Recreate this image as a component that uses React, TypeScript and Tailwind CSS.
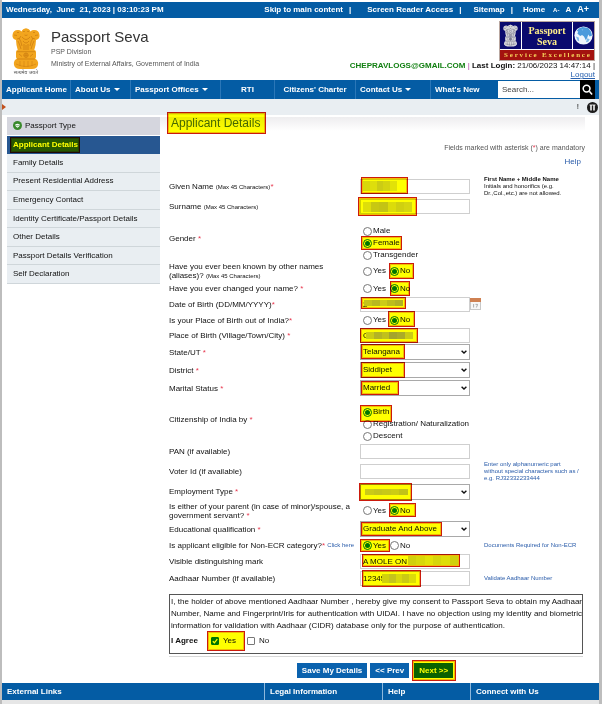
import React, { useState } from "react";
import type { ReactNode } from "react";

/* Marker-pen highlight laid over a control. */
function Mark({ className }: { className: string }) {
  return (
    <span
      aria-hidden="true"
      className={`pointer-events-none absolute z-10 border border-[#cc1a0c] bg-[#ffff00] mix-blend-multiply ring-1 ring-[#cc1a0c]/30 ring-inset ${className}`}
    />
  );
}

/* Mosaic that hides a private value. */
function Mosaic({ className, cells }: { className: string; cells: string[] }) {
  return (
    <span aria-hidden="true" className={`pointer-events-none absolute z-20 flex overflow-hidden ${className}`}>
      {cells.map((c, i) => (
        <span key={i} className={`h-full flex-1 ${c}`} />
      ))}
    </span>
  );
}

const Star = () => <span className="text-[#e8384f]">*</span>;
const Max = () => <span className="text-[6px]">(Max 45 Characters)</span>;

function Row({
  label,
  id,
  hint,
  className,
  children,
}: {
  label: ReactNode;
  id: string;
  hint?: ReactNode;
  className: string;
  children: ReactNode;
}) {
  return (
    <div className={`grid grid-cols-[191px_110px_1fr] items-center ${className}`}>
      <label id={`${id}-label`} htmlFor={id} className="leading-[9px]">
        {label}
      </label>
      <div className="relative flex h-full items-center">{children}</div>
      <div className="pl-3.5 text-[6px] leading-[7px]">{hint}</div>
    </div>
  );
}

function Text({ id, value }: { id: string; value?: string }) {
  return (
    <input
      id={id}
      type="text"
      defaultValue={value}
      className="h-[15px] w-full border border-[#cfcfcf] bg-white px-0.5 text-[8px] text-[#111] outline-none"
    />
  );
}

function Select({ id, options }: { id: string; options: string[] }) {
  return (
    <>
      <select
        id={id}
        className="h-4 w-full appearance-none border border-[#a9a9a9] bg-white px-0.5 text-[8px] text-[#111] outline-none"
      >
        {options.map((o) => (
          <option key={o}>{o}</option>
        ))}
      </select>
      <svg viewBox="0 0 6 4" className="pointer-events-none absolute right-[3px] h-1 w-1.5">
        <path d="M0.6 0.7 L3 3 L5.4 0.7" fill="none" stroke="#111" strokeWidth="1.4" />
      </svg>
    </>
  );
}

function Radio({ name, label, id, checked }: { name: string; label: string; id?: string; checked?: boolean }) {
  return (
    <label className="flex items-center gap-px whitespace-nowrap leading-3">
      <input
        id={id}
        type="radio"
        name={name}
        defaultChecked={checked}
        className="size-[9px] shrink-0 appearance-none rounded-full border border-[#777] bg-white p-px checked:border-[#0075ff] checked:bg-[#0075ff] checked:bg-clip-content"
      />
      {label}
    </label>
  );
}

function YesNo({ name, value }: { name: string; value: "Yes" | "No" }) {
  return (
    <div role="radiogroup" aria-labelledby={`${name}-label`} className="flex gap-1 pl-[3px]">
      <Radio id={name} name={name} label="Yes" checked={value === "Yes"} />
      <Radio name={name} label="No" checked={value === "No"} />
    </div>
  );
}

function Choices({ name, options, selected }: { name: string; options: string[]; selected: string }) {
  return (
    <div role="radiogroup" aria-labelledby={`${name}-label`} className="flex h-full flex-col justify-end pl-[3px]">
      {options.map((o, i) => (
        <Radio key={o} id={i === 0 ? name : undefined} name={name} label={o} checked={o === selected} />
      ))}
    </div>
  );
}

function Emblem({ main, shade, className }: { main: string; shade: string; className: string }) {
  return (
    <svg viewBox="0 0 28 41" className={className} aria-hidden="true">
      <g fill={main}>
        <circle cx="14" cy="5" r="4.6" />
        <path d="M9 4 Q14 -3 19 4 L19 22 L9 22 Z" />
        <path d="M0.5 7 Q1 2 6 2 Q10 2 10 6 L11 22 L6 23 Q4 17 4 12 Q0 11 0.5 7 Z" />
        <path d="M27.5 7 Q27 2 22 2 Q18 2 18 6 L17 22 L22 23 Q24 17 24 12 Q28 11 27.5 7 Z" />
        <rect x="4" y="22" width="20" height="9" rx="2" />
        <path d="M6 30 H22 Q27 32 26 37 Q25 41 20 41 H8 Q3 41 2 37 Q1 32 6 30 Z" />
      </g>
      <g fill="none" stroke={shade} strokeWidth="0.7">
        <path d="M11 3.5 H12.8 M15.2 3.5 H17 M12.5 7 Q14 8 15.5 7 M10 9 Q14 14 18 9 M11 13 Q14 17 17 13" />
        <path d="M2 7 L5 7.5 M5 4.5 H7 M5 11 Q8 11 9 8 M6 13 Q8 17 9 21 M7 10 Q9 13 10 18" />
        <path d="M26 7 L23 7.5 M23 4.5 H21 M23 11 Q20 11 19 8 M22 13 Q20 17 19 21 M21 10 Q19 13 18 18" />
        <path d="M12 16 V22 M16 16 V22 M14 17 V22 M5 23.7 H23 M5 31 H23" />
        <circle cx="14" cy="27.2" r="2.2" />
        <path d="M7 26 L10 28.5 M21 26 L18 28.5 M14 25 V29.4 M11.8 27.2 H16.2" />
        <path d="M4 36 Q14 41 24 36 M8 33 V38 M12 33 V39 M16 33 V39 M20 33 V38" strokeWidth="0.5" />
      </g>
    </svg>
  );
}

function ServiceLogo() {
  return (
    <div className="w-24 border border-[#b9a7a0] bg-white text-center font-['Liberation_Serif',serif] font-bold">
      <div className="flex h-[27px] gap-px">
        <div className="flex flex-1 flex-col items-center justify-center bg-[#0a0a6e]">
          <Emblem main="#d5d5da" shade="#33334f" className="h-[23px] w-[15px]" />
        </div>
        <div className="flex w-[50px] flex-col justify-center bg-[#0a0a6e] text-[10px] leading-[11px] text-[#ffef8a]">
          <span>Passport</span>
          <span>Seva</span>
        </div>
        <div className="flex flex-1 items-center justify-center bg-[#0a0a6e]">
          <svg viewBox="0 0 20 20" className="size-[19px]" aria-hidden="true">
            <circle cx="10" cy="10" r="9.6" fill="#eef6fd" />
            <path
              d="M5 2.5 L9 1 L15 2 L18 6 L19 10 L16.5 11 L15 9 L14 12 L12.5 15 L10.5 11 L8.5 9.5 L6.5 10.5 L3.5 8 L4.5 6 L3 5 Z"
              fill="#4b9bdc"
            />
            <path d="M14 13 L16.5 14 L15 16.5 L12.5 17 Z M2 11 L5 12 L5.5 16 L4 15.5 Z M8 3 L10 4 L8.5 5 Z" fill="#7db9e8" />
          </svg>
        </div>
      </div>
      <div className="mt-px flex h-2.5 items-center justify-between bg-[#a3120f] px-1 text-[7px] leading-[10px] text-[#f6d35a]">
        {"Service Excellence".split("").map((c, i) => (
          <span key={i}>{c === " " ? "\u00a0" : c}</span>
        ))}
      </div>
    </div>
  );
}

const Caret = () => (
  <svg viewBox="0 0 6 3" className="h-[3px] w-1.5" aria-hidden="true">
    <path d="M0 0 H6 L3 3 Z" fill="#fff" />
  </svg>
);

const navItems = [
  { label: "Applicant Home", box: "w-[69px] pl-1" },
  { label: "About Us", box: "w-[60px] pl-1", caret: true },
  { label: "Passport Offices", box: "w-[90px] pl-1", caret: true },
  { label: "RTI", box: "w-[54px] justify-center" },
  { label: "Citizens' Charter", box: "w-[81px] justify-center" },
  { label: "Contact Us", box: "w-[75px] pl-1", caret: true },
  { label: "What's New", box: "pl-1" },
];

const steps = [
  "Family Details",
  "Present Residential Address",
  "Emergency Contact",
  "Identity Certificate/Passport Details",
  "Other Details",
  "Passport Details Verification",
  "Self Declaration",
];

const topLinks = [
  { label: "Skip to main content", gap: "mr-4" },
  { label: "Screen Reader Access", gap: "mr-3" },
  { label: "Sitemap", gap: "mr-2.5" },
];

const footer = [
  { label: "External Links", box: "w-[262px] pl-[5px]" },
  { label: "Legal Information", box: "w-[118px] pl-[5px]" },
  { label: "Help", box: "w-[88px] pl-[5px]" },
  { label: "Connect with Us", box: "flex-1 pl-[5px]" },
];

export default function App() {
  const [agree, setAgree] = useState(true);
  const tick =
    "size-2 appearance-none rounded-[1px] border border-[#777] bg-white checked:border-[#0075ff] checked:bg-[#0075ff]";
  const button = "h-[15px] bg-[#0a62ae] px-[5px] text-[8px] leading-[15px] font-bold text-white";

  return (
    <div className="min-h-screen border-r-3 border-l-2 border-[#bdbdbd] bg-[#e6e6e6] font-['Liberation_Sans',Arial,sans-serif] text-[8px] text-[#111]">
      <div className="bg-white pt-0.5">
        <div className="flex h-4 items-center bg-[#045ca4] pr-2.5 pl-1 font-bold whitespace-pre text-white">
          <span className="flex-1">{"Wednesday,  June  21, 2023 | 03:10:23 PM"}</span>
          {topLinks.map((l) => (
            <span key={l.label} className={`flex gap-1.5 ${l.gap}`}>
              <a href="#main">{l.label}</a>
              <span>|</span>
            </span>
          ))}
          <a href="#home">Home</a>
          <button type="button" className="ml-2 text-[6px]">A-</button>
          <button type="button" className="ml-1.5">A</button>
          <button type="button" className="ml-1.5 text-[9px]">A+</button>
        </div>

        <header className="flex h-[62px] justify-between">
          <div className="flex pt-2.5 pl-2.5">
            <div className="flex w-7 flex-col items-center">
              <Emblem main="#f2a51e" shade="#c97a10" className="h-[41px] w-7" />
              <span className="font-['Noto_Sans',sans-serif] text-[5px] leading-[6px] whitespace-nowrap text-[#555]">सत्यमेव जयते</span>
            </div>
            <div className="pl-[11px] text-[7px] text-[#555]">
              <h1 className="text-[15px] leading-[18px] text-[#333]">Passport Seva</h1>
              <p className="leading-3">PSP Division</p>
              <p className="leading-3">Ministry of External Affairs, Government of India</p>
            </div>
          </div>
          <div className="flex flex-col items-end pt-[3px] pr-1">
            <ServiceLogo />
            <p className="whitespace-nowrap leading-[10px]">
              <b className="text-[#138013]">CHEPRAVLOGS@GMAIL.COM</b> <span className="text-[#b040a0]">|</span>{" "}
              <b>Last Login:</b> 21/06/2023 14:47:14 |
            </p>
            <a href="#logout" className="leading-[7px] text-[#2a62b0] underline">Logout</a>
          </div>
        </header>

        <nav className="flex h-[19px] bg-[#045ca4] pr-1 font-bold text-white">
          {navItems.map((n) => (
            <a
              key={n.label}
              href="#nav"
              className={`flex items-center gap-[3px] whitespace-nowrap ${n.box} ${n.label === "What's New" ? "flex-1" : "border-r border-[#2b77b8]"}`}
            >
              {n.label}
              {n.caret && <Caret />}
            </a>
          ))}
          <input
            type="text"
            aria-label="Search"
            placeholder="Search..."
            className="my-px w-[82px] bg-white px-1 text-[8px] font-normal text-[#222] outline-none placeholder:text-[#444]"
          />
          <button type="button" aria-label="Search" className="flex w-[15px] items-center justify-center bg-black">
            <svg viewBox="0 0 12 12" className="size-[11px]" fill="none" stroke="#fff" strokeWidth="1.7">
              <circle cx="5" cy="5" r="3.7" />
              <path d="M8 8 L11 11.4" />
            </svg>
          </button>
        </nav>

        <div className="flex h-4 items-center justify-between bg-[#e9eef2] pr-px">
          <svg viewBox="0 0 4 6" className="h-1.5 w-1" aria-hidden="true">
            <path d="M0 0 L4 3 L0 6 Z" fill="#c2501c" />
          </svg>
          <div className="flex items-center gap-2">
            <span>!</span>
            <button type="button" aria-label="Pause">
              <svg viewBox="0 0 11 11" className="size-[11px]">
                <circle cx="5.5" cy="5.5" r="5.5" fill="#1c1c1c" />
                <path d="M4 3 V8.4 M7 3 V8.4" stroke="#fff" strokeWidth="1.5" />
                <path d="M2.5 3 H8.5" stroke="#fff" strokeWidth="0.8" />
              </svg>
            </button>
          </div>
        </div>

        <div className="flex items-start pt-0.5 pr-3.5 pl-[5px]">
          <ol className="grid h-[167px] w-[153px] shrink-0 auto-rows-fr bg-[#e9eef2]">
            <li className="flex items-center gap-[3px] border-b border-white bg-[#d5d6de] pl-1.5">
              <svg viewBox="0 0 9 9" className="size-[9px]" aria-hidden="true">
                <circle cx="4.5" cy="4.5" r="4.5" fill="#3a8a2c" />
                <path d="M2.2 3.6 Q4.5 2 6.8 3.6 Q6.6 5.8 4.5 6.8 Q2.4 5.8 2.2 3.6 Z" fill="#fff" />
                <path d="M3.4 4 L4.5 5.2 L5.8 3.8" fill="none" stroke="#3a8a2c" strokeWidth="0.8" />
              </svg>
              Passport Type
            </li>
            <li className="relative flex items-center bg-[#275791] pl-1.5 font-bold text-white" aria-current="step">
              Applicant Details
              <Mark className="inset-y-px left-[3px] w-[70px]" />
            </li>
            {steps.map((s) => (
              <li key={s} className="flex items-center border-b border-[#cfd6da] pl-1.5">
                <a href="#step">{s}</a>
              </li>
            ))}
          </ol>

          <main id="main" className="min-w-0 flex-1 bg-linear-to-b from-[#eeedef] to-white to-[14px] pl-[9px]">
            <div className="relative">
              <h2 className="pl-0.5 text-[12px] leading-3 text-[#45687c]">Applicant Details</h2>
              <Mark className="-top-[5px] -left-0.5 h-[22px] w-[99px]" />
            </div>
            <p className="pt-3.5 text-right text-[7px] leading-[10px] text-[#555]">
              Fields marked with asterisk (<Star />) are mandatory
            </p>
            <p className="pt-1 pr-1 pb-[9px] text-right leading-[10px]">
              <a href="#help" className="text-[#2a5caa]">Help</a>
            </p>

            <form onSubmit={(e) => e.preventDefault()}>
              <Row
                id="given"
                className="min-h-[21px]"
                label={<>Given Name <Max /><Star /></>}
                hint={<><b className="whitespace-nowrap">First Name + Middle Name</b><br />Initials and honorifics (e.g.<br />Dr.,Col.,etc.) are not allowed.</>}
              >
                <Text id="given" />
                <Mark className="top-px left-px h-[17px] w-[47px]" />
                <Mosaic className="top-[5px] left-[3px] h-2.5 w-[34px]" cells={["bg-[#d8d80a]", "bg-[#dede0c]", "bg-[#cccc14]", "bg-[#d4d410]", "bg-[#e2e208]"]} />
              </Row>
              <Row id="surname" className="min-h-[19px]" label={<>Surname <Max /></>}>
                <Text id="surname" />
                <Mark className="top-0 -left-0.5 h-[19px] w-[59px]" />
                <Mosaic className="top-[5px] left-[3px] h-2.5 w-[49px]" cells={["bg-[#dede0a]", "bg-[#c8c812]", "bg-[#c4c414]", "bg-[#dcdc0a]", "bg-[#d0d010]", "bg-[#d6d610]"]} />
              </Row>
              <Row id="gender" className="min-h-[45px]" label={<>Gender <Star /></>}>
                <Choices name="gender" options={["Male", "Female", "Transgender"]} selected="Female" />
                <Mark className="top-5 left-px h-3.5 w-[41px]" />
              </Row>
              <Row id="alias" className="min-h-5" label={<>Have you ever been known by other names<br />(aliases)? <Max /></>}>
                <YesNo name="alias" value="No" />
                <Mark className="top-0.5 left-[29px] h-4 w-[25px]" />
              </Row>
              <Row id="renamed" className="min-h-[15px]" label={<>Have you ever changed your name? <Star /></>}>
                <YesNo name="renamed" value="No" />
                <Mark className="top-0 left-[30px] h-[15px] w-5" />
              </Row>
              <Row
                id="dob"
                className="min-h-4"
                label={<>Date of Birth (DD/MM/YYYY)<Star /></>}
                hint={
                  <button type="button" aria-label="Open calendar" className="-ml-3.5 block">
                    <svg viewBox="0 0 11 12" className="h-3 w-[11px]">
                      <rect x="0.5" y="0.5" width="10" height="11" fill="#f7f7f7" stroke="#c8c8c8" />
                      <rect width="11" height="4" fill="#cf8152" />
                      <path d="M3.6 6 V9.5 M5.5 6.4 H7.6 L6.4 9.5" stroke="#999" strokeWidth="0.8" fill="none" />
                    </svg>
                  </button>
                }
              >
                <Text id="dob" value="2" />
                <Mark className="top-px left-px h-3 w-[45px]" />
                <Mosaic className="top-1 left-1 h-1.5 w-[39px]" cells={["bg-[#c4c41c]", "bg-[#b8b820]", "bg-[#cccc18]", "bg-[#bcbc1c]", "bg-[#b0b024]"]} />
              </Row>
              <Row id="abroad" className="min-h-4" label={<>Is your Place of Birth out of India?<Star /></>}>
                <YesNo name="abroad" value="No" />
                <Mark className="-top-px left-7 h-4 w-[27px]" />
              </Row>
              <Row id="place" className="min-h-[15px]" label={<>Place of Birth (Village/Town/City) <Star /></>}>
                <Text id="place" value="G" />
                <Mark className="top-0 left-0 h-[15px] w-[58px]" />
                <Mosaic className="top-1 left-1.5 h-[7px] w-[47px]" cells={["bg-[#cccc14]", "bg-[#b4b424]", "bg-[#c0c01c]", "bg-[#a4a42c]", "bg-[#acac28]", "bg-[#cccc14]"]} />
              </Row>
              <Row id="state" className="min-h-[18px]" label={<>State/UT <Star /></>}>
                <Select id="state" options={["Telangana", "Andhra Pradesh", "Karnataka"]} />
                <Mark className="top-px left-px h-[15px] w-11" />
              </Row>
              <Row id="district" className="min-h-[18px]" label={<>District <Star /></>}>
                <Select id="district" options={["Siddipet", "Medak"]} />
                <Mark className="top-px left-px h-4 w-11" />
              </Row>
              <Row id="marital" className="min-h-[18px]" label={<>Marital Status <Star /></>}>
                <Select id="marital" options={["Married", "Single"]} />
                <Mark className="top-0.5 left-px h-3.5 w-[38px]" />
              </Row>
              <Row id="citizen" className="min-h-[45px]" label={<>Citizenship of India by <Star /></>}>
                <Choices name="citizen" options={["Birth", "Registration/ Naturalization", "Descent"]} selected="Birth" />
                <Mark className="top-2 left-0 h-[17px] w-8" />
              </Row>
              <Row id="pan" className="min-h-[19px]" label="PAN (if available)">
                <Text id="pan" />
              </Row>
              <Row
                id="voter"
                className="min-h-[21px]"
                label="Voter Id (if available)"
                hint={<span className="text-[#2a5caa]">Enter only alphanumeric part<br />without special characters such as /<br />e.g. RJ32332233444</span>}
              >
                <Text id="voter" />
              </Row>
              <Row id="job" className="min-h-[19px]" label={<>Employment Type <Star /></>}>
                <Select id="job" options={[""]} />
                <Mark className="top-px -left-px h-[18px] w-[53px]" />
                <Mosaic className="top-[7px] left-[5px] h-1.5 w-[43px]" cells={["bg-[#caca18]", "bg-[#c4c41c]", "bg-[#c8c818]", "bg-[#cccc14]", "bg-[#c2c218]"]} />
              </Row>
              <Row id="servant" className="min-h-[19px]" label={<>Is either of your parent (in case of minor)/spouse, a<br />government servant? <Star /></>}>
                <YesNo name="servant" value="No" />
                <Mark className="top-0.5 left-[29px] h-3.5 w-[27px]" />
              </Row>
              <Row id="education" className="min-h-[18px]" label={<>Educational qualification <Star /></>}>
                <Select id="education" options={["Graduate And Above", "10th Pass And Above"]} />
                <Mark className="top-0.5 left-px h-3.5 w-[81px]" />
              </Row>
              <Row
                id="ecr"
                className="min-h-[15px]"
                label={
                  <span className="flex justify-between pr-1.5 whitespace-nowrap">
                    <span>Is applicant eligible for Non-ECR category?<Star /></span>
                    <a href="#ecr-help" className="text-[6px] text-[#2a5caa]">Click here</a>
                  </span>
                }
                hint={<a href="#documents" className="text-[#2a5caa]">Documents Required for Non-ECR</a>}
              >
                <YesNo name="ecr" value="Yes" />
                <Mark className="top-px left-0 h-[13px] w-[30px]" />
              </Row>
              <Row id="visible" className="min-h-4" label="Visible distinguishing mark">
                <Text id="visible" value="A MOLE ON" />
                <Mark className="top-px left-0.5 h-[13px] w-[98px]" />
                <Mosaic className="top-[3px] left-12 h-[9px] w-[50px]" cells={["bg-[#d0d00c]", "bg-[#d8d80a]", "bg-[#e2e208]", "bg-[#d6d60c]", "bg-[#dede08]", "bg-[#d0d00c]"]} />
              </Row>
              <Row
                id="aadhaar"
                className="min-h-[19px]"
                label="Aadhaar Number (if available)"
                hint={<a href="#validate" className="text-[#2a5caa]">Validate Aadhaar Number</a>}
              >
                <Text id="aadhaar" value="12345" />
                <Mark className="top-px left-0.5 h-[17px] w-[59px]" />
                <Mosaic className="top-[5px] left-[22px] h-[9px] w-[34px]" cells={["bg-[#d0d00c]", "bg-[#c4c41c]", "bg-[#d8d80c]", "bg-[#caca14]", "bg-[#dcdc0a]"]} />
              </Row>

              <section className="mt-1.5 mr-0.5 border border-[#555] pt-px pb-[3px] pl-px">
                <p className="text-justify leading-3">
                  I, the holder of above mentioned Aadhaar Number , hereby give my consent to Passport Seva to obtain my Aadhaar
                  Number, Name and Fingerprint/Iris for authentication with UIDAI. I have no objection using my identity and
                  biometric information for validation with Aadhaar (CIDR) database only for the purpose of authentication.
                </p>
                <div className="relative flex h-[18px] items-center">
                  <b className="w-10">I Agree</b>
                  <label className="flex w-9 items-center gap-1">
                    <span className="relative flex">
                      <input type="checkbox" checked={agree} onChange={() => setAgree(true)} className={tick} />
                      {agree && (
                        <svg viewBox="0 0 8 8" className="pointer-events-none absolute inset-0 size-2">
                          <path d="M1.8 4.2 L3.4 5.8 L6.3 2.2" fill="none" stroke="#fff" strokeWidth="1.3" />
                        </svg>
                      )}
                    </span>
                    Yes
                  </label>
                  <label className="flex items-center gap-1">
                    <input type="checkbox" checked={!agree} onChange={() => setAgree(false)} className={tick} />
                    No
                  </label>
                  <Mark className="-top-px left-9 h-5 w-[38px]" />
                </div>
              </section>
              <hr className="mt-0.5 mr-0.5 border-[#d8d8d8]" />
              <div className="flex justify-center gap-[3px] pt-1.5 pr-1 pb-[5px]">
                <button type="button" className={button}>Save My Details</button>
                <button type="button" className={button}>&lt;&lt; Prev</button>
                <span className="relative ml-0.5 flex">
                  <button type="submit" className={button}>Next &gt;&gt;</button>
                  <Mark className="-inset-y-[3px] -right-[3px] -left-0.5" />
                </span>
              </div>
            </form>
          </main>
        </div>
      </div>

      <footer className="flex h-[17px] bg-[#045ca4] font-bold text-white">
        {footer.map((f, i) => (
          <div key={f.label} className={`flex items-center ${f.box} ${i > 0 ? "border-l border-[#8db8dc]" : ""}`}>
            {f.label}
          </div>
        ))}
      </footer>
    </div>
  );
}
